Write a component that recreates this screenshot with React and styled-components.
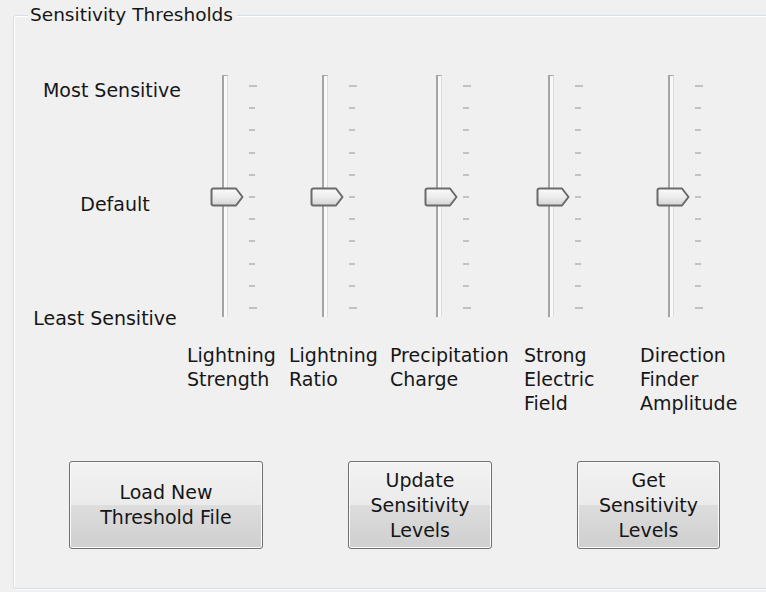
import React from "react";
import styled, { createGlobalStyle } from "styled-components";

const GlobalStyle = createGlobalStyle`
  html, body {
    margin: 0;
    padding: 0;
    background: #f0f0f0;
  }
  body {
    font-family: "DejaVu Sans", Tahoma, sans-serif;
    font-size: 19px;
    color: #161616;
  }
`;

const sliders = [
  { name: "strength", label: ["Lightning", "Strength"] },
  { name: "ratio", label: ["Lightning", "Ratio"] },
  { name: "precip", label: ["Precipitation", "Charge"] },
  { name: "field", label: ["Strong", "Electric", "Field"] },
  { name: "df", label: ["Direction", "Finder", "Amplitude"] },
];

const TICKS = 11;

function Thumb() {
  return (
    <svg width="35" height="20" viewBox="0 0 35 20">
      <defs>
        <linearGradient id="thumbFill" x1="0" y1="0" x2="0" y2="1">
          <stop offset="0" stopColor="#fbfbfb" />
          <stop offset="0.5" stopColor="#ececec" />
          <stop offset="1" stopColor="#d4d4d4" />
        </linearGradient>
      </defs>
      <path
        d="M3.5 1.5 H26 L32.5 10 L26 18.5 H3.5 Q1.5 18.5 1.5 16.5 V3.5 Q1.5 1.5 3.5 1.5 Z"
        fill="url(#thumbFill)"
        stroke="#6a6a6a"
        strokeWidth="2"
        strokeLinejoin="round"
      />
    </svg>
  );
}

function Slider() {
  return (
    <SliderBox>
      <TrackArea>
        <Track />
        <ThumbHolder>
          <Thumb />
        </ThumbHolder>
      </TrackArea>
      <Ticks>
        {Array.from({ length: TICKS }).map((_, i) => (
          <Tick key={i} $long={i === 0 || i === TICKS - 1} />
        ))}
      </Ticks>
    </SliderBox>
  );
}

export default function App() {
  return (
    <>
      <GlobalStyle />
      <Page>
        <Group>
          <Legend>Sensitivity Thresholds</Legend>

          <SliderArea>
            <ScaleLabels>
              <ScaleLabel>Most Sensitive</ScaleLabel>
              <ScaleLabel $padLeft={6}>Default</ScaleLabel>
              <ScaleLabel $padRight={14}>Least Sensitive</ScaleLabel>
            </ScaleLabels>
            <SliderGrid>
              {sliders.map((s) => (
                <Slider key={s.name} />
              ))}
            </SliderGrid>
          </SliderArea>

          <NameRow>
            {sliders.map((s) => (
              <Name key={s.name}>
                {s.label.map((line) => (
                  <div key={line}>{line}</div>
                ))}
              </Name>
            ))}
          </NameRow>

          <ButtonRow>
            <Button $w={194}>
              Load New
              <br />
              Threshold File
            </Button>
            <Button $w={144}>
              Update
              <br />
              Sensitivity
              <br />
              Levels
            </Button>
            <Button $w={143}>
              Get
              <br />
              Sensitivity
              <br />
              Levels
            </Button>
          </ButtonRow>
        </Group>
      </Page>
    </>
  );
}

const Page = styled.div`
  width: 766px;
  height: 592px;
  padding-top: 4px;
  box-sizing: border-box;
  overflow: hidden;
`;

const Group = styled.fieldset`
  margin: 0 -3px 0 13px;
  padding: 49px 0 39px;
  min-width: 0;
  border: 1px solid #d5dfe5;
  border-radius: 3px;
  box-shadow: inset 1px 1px 0 #ffffff, 1px 1px 0 #ffffff;
`;

const Legend = styled.legend`
  margin-left: 14px;
  padding: 0 4px 0 2px;
  font-size: 18.5px;
  line-height: 22px;
  background: #f0f0f0;
`;

const SliderArea = styled.div`
  display: flex;
  align-items: flex-start;
`;

const ScaleLabels = styled.div`
  width: 196px;
  height: 250px;
  margin-top: 4px;
  display: flex;
  flex-direction: column;
  justify-content: space-between;
  text-align: center;
  line-height: 22px;
`;

const ScaleLabel = styled.div`
  padding-left: ${(p) => p.$padLeft || 0}px;
  padding-right: ${(p) => p.$padRight || 0}px;
  white-space: nowrap;
`;

const SliderGrid = styled.div`
  display: grid;
  grid-template-columns: 100px 114px 112px 120px 47px;
`;

const SliderBox = styled.div`
  display: flex;
  height: 242px;
`;

const TrackArea = styled.div`
  position: relative;
  width: 35px;
  height: 100%;
`;

const Track = styled.div`
  margin-left: 12px;
  width: 6px;
  height: 100%;
  box-sizing: border-box;
  border-left: 2px solid #a4a4a4;
  border-right: 1px solid #dcdcdc;
  border-top: 1px solid #a4a4a4;
  background: #f9f9f9;
`;

const ThumbHolder = styled.div`
  position: absolute;
  top: 112px;
  left: 0;
  height: 20px;
  line-height: 0;
`;

const Ticks = styled.div`
  margin-left: 4px;
  width: 8px;
  padding: 10px 0 8px;
  box-sizing: border-box;
  display: flex;
  flex-direction: column;
  justify-content: space-between;
`;

const Tick = styled.div`
  width: ${(p) => (p.$long ? 8 : 6)}px;
  height: 2px;
  background: #c2c2c2;
`;

const NameRow = styled.div`
  margin: 14px 0 0 173px;
  display: grid;
  grid-template-columns: 102px 101px 134px 116px auto;
  line-height: 24px;
`;

const Name = styled.div`
  white-space: nowrap;
`;

const ButtonRow = styled.div`
  margin-top: 46px;
  padding-left: 55px;
  display: flex;
  gap: 85px;
`;

const Button = styled.button`
  width: ${(p) => p.$w}px;
  height: 88px;
  padding: 0;
  border: 1px solid #707070;
  border-radius: 3px;
  background: linear-gradient(
    #f2f2f2 0%,
    #ebebeb 50%,
    #dddddd 50%,
    #cfcfcf 100%
  );
  box-shadow: inset 0 0 0 1px #fbfbfb;
  font: inherit;
  line-height: 25px;
  color: #161616;
  text-align: center;
`;
